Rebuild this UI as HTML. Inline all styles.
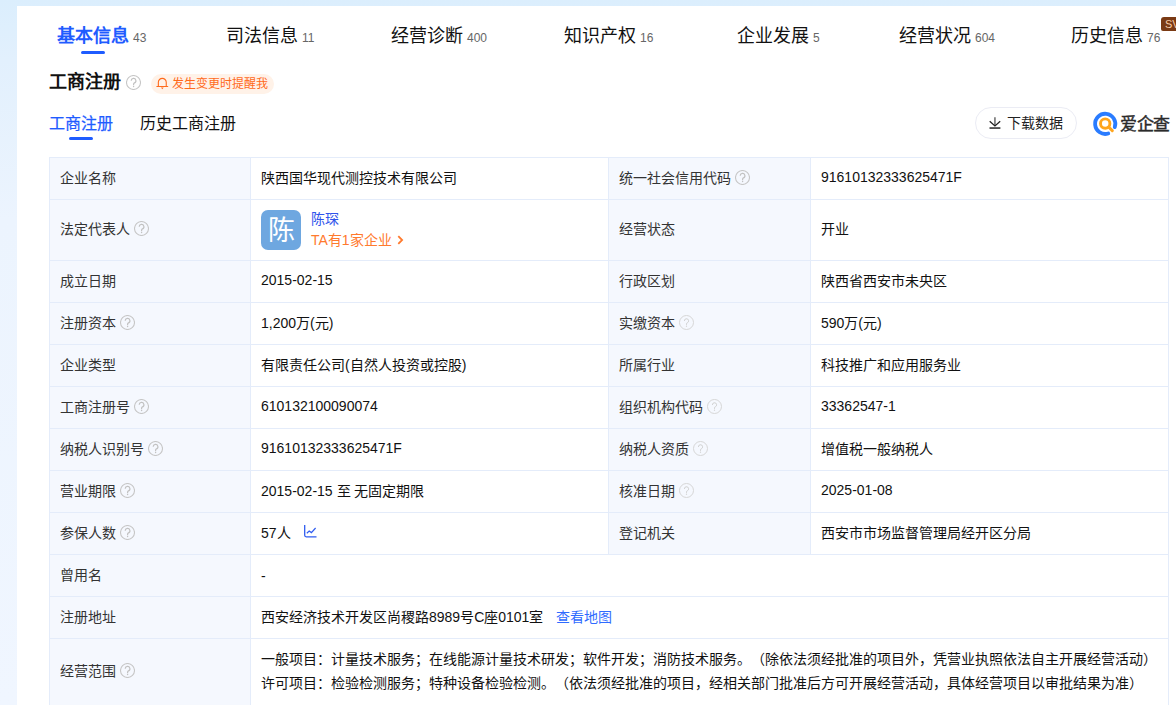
<!DOCTYPE html>
<html lang="zh-CN"><head><meta charset="utf-8">
<style>
*{box-sizing:border-box;margin:0;padding:0}
html,body{width:1176px;height:705px;overflow:hidden}
body{font-family:"Liberation Sans",sans-serif;color:#222;position:relative;
background:linear-gradient(180deg,#dbeefd 0px,#e2f0fd 60px,#ecf4fe 220px,#f0f6ff 705px)}
.card{position:absolute;left:17px;top:6px;width:1300px;height:800px;background:#fff}
.tab{position:absolute;top:24px;height:24px;line-height:24px;font-size:18px;color:#111;white-space:nowrap}
.tab .n{font-size:12px;color:#666;margin-left:4px}
.tab.on{color:#1f5cff;font-weight:bold}
.tab.on .n{font-weight:normal}
.uline{position:absolute;height:3px;border-radius:2px;background:#1f5cff}
.svip{position:absolute;left:1161px;top:17px;width:40px;height:14px;border-radius:3px 0 0 2px;background:#7a3a14;color:#f6cba9;font-size:11px;line-height:14px;padding-left:4px;font-weight:normal;white-space:nowrap}
.title{position:absolute;left:49px;top:70px;font-size:18px;font-weight:bold;color:#111;line-height:24px;white-space:nowrap}
.title .qi{position:absolute;left:77px;top:5px}
.pill{position:absolute;left:151px;top:74px;width:123px;height:20px;border-radius:10px;background:#fff2e8;color:#ff6a1b;font-size:12px;line-height:21px;white-space:nowrap;padding-left:21px}
.pill svg{position:absolute;left:5px;top:3px}
.sub{position:absolute;top:113px;font-size:16px;line-height:22px;color:#111;white-space:nowrap}
.btn{position:absolute;left:975px;top:107px;width:102px;height:32px;border:1px solid #ebecf4;border-radius:16px;font-size:14px;line-height:30px;color:#222;white-space:nowrap;padding-left:31px}
.btn svg{position:absolute;left:12px;top:8px}
.logo{position:absolute;left:1088px;top:106px}
.logotxt{position:absolute;left:1120px;top:113px;font-size:17px;line-height:24px;color:#2b2b2b;font-weight:normal;-webkit-text-stroke:0.45px #2b2b2b;white-space:nowrap;letter-spacing:-0.5px}
table{position:absolute;left:49px;top:157px;border-collapse:collapse;table-layout:fixed;width:1119px}
td{border:1px solid #e4ecfa;font-size:14px;color:#111;padding:0 0 4px 10px;height:42px;vertical-align:middle;white-space:nowrap;position:relative}
td.l{background:#f5f8fe;color:#333}
td .qi{vertical-align:-2px;margin-left:4px}
td{text-spacing-trim:space-all}
.av{position:absolute;left:10px;top:10px;width:40px;height:40px;border-radius:7px;background:#6ea7e0;color:#fff;font-size:27px;line-height:43px;text-align:center}
.nm{position:absolute;left:60px;top:9px;font-size:14px;line-height:20px;color:#2f54eb;-webkit-text-stroke:0}
.ta{position:absolute;left:60px;top:30px;font-size:14px;line-height:20px;color:#ff7a2e;-webkit-text-stroke:0}
.ta svg{vertical-align:0px;margin-left:5px}
.lnk{color:#2f6bff;margin-left:13px}
.scope{line-height:24px;padding-top:8px;vertical-align:top}
.dash{position:relative;top:2px}
</style></head><body>
<div class="card"></div>

<div class="tab on" style="left:57px">基本信息<span class="n">43</span></div>
<div class="uline" style="left:81px;top:51px;width:24px"></div>
<div class="tab" style="left:226px">司法信息<span class="n">11</span></div>
<div class="tab" style="left:391px">经营诊断<span class="n">400</span></div>
<div class="tab" style="left:564px">知识产权<span class="n">16</span></div>
<div class="tab" style="left:737px">企业发展<span class="n">5</span></div>
<div class="tab" style="left:899px">经营状况<span class="n">604</span></div>
<div class="tab" style="left:1071px">历史信息<span class="n">76</span></div>
<div class="svip">SVIP</div>

<div class="title">工商注册 <svg class="qi" width="15" height="15" viewBox="0 0 15 15"><circle cx="7.5" cy="7.5" r="7" fill="none" stroke="#c6c6c6" stroke-width="1.05"/><path d="M5.2 5.7a2.35 2.35 0 1 1 3.3 2.15c-.6.3-.9.7-.9 1.3v1" fill="none" stroke="#c2c2c2" stroke-width="1.2"/><circle cx="7.6" cy="11.5" r=".7" fill="#c2c2c2"/></svg></div>
<div class="pill"><svg width="13" height="14" viewBox="0 0 13 14"><path d="M2.35 9.5V5.3a3.95 3.95 0 0 1 7.9 0V9.5" fill="none" stroke="#ff6a1b" stroke-width="1.1"/><path d="M0.9 9.5H11.7" stroke="#ff6a1b" stroke-width="1.2" stroke-linecap="round"/><path d="M4.9 10.5h2.8l-1.4 1.7z" fill="#ff6a1b"/></svg>发生变更时提醒我</div>

<div class="sub" style="left:49px;color:#1f5cff;-webkit-text-stroke:0.25px #1f5cff">工商注册</div>
<div class="uline" style="left:69px;top:137px;width:24px"></div>
<div class="sub" style="left:140px">历史工商注册</div>

<div class="btn"><svg width="14" height="14" viewBox="0 0 14 14"><path d="M6.95 1.2V9.6" stroke="#444" stroke-width="1.2"/><path d="M1.7 5.3L6.95 9.9L12.2 5.3" fill="none" stroke="#222" stroke-width="1.3"/><path d="M1.5 12.05H12.4" stroke="#333" stroke-width="1.6"/></svg>下载数据</div>
<svg class="logo" width="31" height="34" viewBox="0 0 31 34"><path d="M26.75 21.14A10.1 10.1 0 1 0 20.24 27.48" fill="none" stroke="#2a7cff" stroke-width="3.8" stroke-linecap="round"/><circle cx="17.2" cy="17.6" r="4.7" fill="none" stroke="#ffa51d" stroke-width="2.9"/><path d="M20.6 21L24.3 24.6" stroke="#ffa51d" stroke-width="3" stroke-linecap="round"/></svg>
<div class="logotxt">爱企查</div>

<table>
<colgroup><col style="width:201px"><col style="width:358px"><col style="width:202px"><col style="width:358px"></colgroup>
<tr><td class="l">企业名称</td><td>陕西国华现代测控技术有限公司</td><td class="l">统一社会信用代码<svg class="qi" width="15" height="15" viewBox="0 0 15 15"><circle cx="7.5" cy="7.5" r="7" fill="none" stroke="#c6c6c6" stroke-width="1.05"/><path d="M5.2 5.7a2.35 2.35 0 1 1 3.3 2.15c-.6.3-.9.7-.9 1.3v1" fill="none" stroke="#c2c2c2" stroke-width="1.2"/><circle cx="7.6" cy="11.5" r=".7" fill="#c2c2c2"/></svg></td><td>91610132333625471F</td></tr>
<tr><td class="l" style="height:61px">法定代表人<svg class="qi" width="15" height="15" viewBox="0 0 15 15"><circle cx="7.5" cy="7.5" r="7" fill="none" stroke="#c6c6c6" stroke-width="1.05"/><path d="M5.2 5.7a2.35 2.35 0 1 1 3.3 2.15c-.6.3-.9.7-.9 1.3v1" fill="none" stroke="#c2c2c2" stroke-width="1.2"/><circle cx="7.6" cy="11.5" r=".7" fill="#c2c2c2"/></svg></td><td><div class="av">陈</div><div class="nm">陈琛</div><div class="ta">TA有1家企业<svg width="7" height="10" viewBox="0 0 7 10"><path d="M1.3 1.2l3.8 3.8-3.8 3.8" fill="none" stroke="#ff7a2e" stroke-width="1.8"/></svg></div></td><td class="l">经营状态</td><td>开业</td></tr>
<tr><td class="l">成立日期</td><td>2015-02-15</td><td class="l">行政区划</td><td>陕西省西安市未央区</td></tr>
<tr><td class="l">注册资本<svg class="qi" width="15" height="15" viewBox="0 0 15 15"><circle cx="7.5" cy="7.5" r="7" fill="none" stroke="#c6c6c6" stroke-width="1.05"/><path d="M5.2 5.7a2.35 2.35 0 1 1 3.3 2.15c-.6.3-.9.7-.9 1.3v1" fill="none" stroke="#c2c2c2" stroke-width="1.2"/><circle cx="7.6" cy="11.5" r=".7" fill="#c2c2c2"/></svg></td><td>1,200万(元)</td><td class="l">实缴资本<svg class="qi" width="15" height="15" viewBox="0 0 15 15"><circle cx="7.5" cy="7.5" r="7" fill="none" stroke="#d6d6d6" stroke-width="1"/><path d="M5.4 5.9a2.1 2.1 0 1 1 2.9 1.9c-.5.25-.8.6-.8 1.1v.9" fill="none" stroke="#d0d0d0" stroke-width="1"/><circle cx="7.5" cy="11.2" r=".65" fill="#d0d0d0"/></svg></td><td>590万(元)</td></tr>
<tr><td class="l">企业类型</td><td>有限责任公司(自然人投资或控股)</td><td class="l">所属行业</td><td>科技推广和应用服务业</td></tr>
<tr><td class="l">工商注册号<svg class="qi" width="15" height="15" viewBox="0 0 15 15"><circle cx="7.5" cy="7.5" r="7" fill="none" stroke="#c6c6c6" stroke-width="1.05"/><path d="M5.2 5.7a2.35 2.35 0 1 1 3.3 2.15c-.6.3-.9.7-.9 1.3v1" fill="none" stroke="#c2c2c2" stroke-width="1.2"/><circle cx="7.6" cy="11.5" r=".7" fill="#c2c2c2"/></svg></td><td>610132100090074</td><td class="l">组织机构代码<svg class="qi" width="15" height="15" viewBox="0 0 15 15"><circle cx="7.5" cy="7.5" r="7" fill="none" stroke="#d6d6d6" stroke-width="1"/><path d="M5.4 5.9a2.1 2.1 0 1 1 2.9 1.9c-.5.25-.8.6-.8 1.1v.9" fill="none" stroke="#d0d0d0" stroke-width="1"/><circle cx="7.5" cy="11.2" r=".65" fill="#d0d0d0"/></svg></td><td>33362547-1</td></tr>
<tr><td class="l">纳税人识别号<svg class="qi" width="15" height="15" viewBox="0 0 15 15"><circle cx="7.5" cy="7.5" r="7" fill="none" stroke="#c6c6c6" stroke-width="1.05"/><path d="M5.2 5.7a2.35 2.35 0 1 1 3.3 2.15c-.6.3-.9.7-.9 1.3v1" fill="none" stroke="#c2c2c2" stroke-width="1.2"/><circle cx="7.6" cy="11.5" r=".7" fill="#c2c2c2"/></svg></td><td>91610132333625471F</td><td class="l">纳税人资质<svg class="qi" width="15" height="15" viewBox="0 0 15 15"><circle cx="7.5" cy="7.5" r="7" fill="none" stroke="#d6d6d6" stroke-width="1"/><path d="M5.4 5.9a2.1 2.1 0 1 1 2.9 1.9c-.5.25-.8.6-.8 1.1v.9" fill="none" stroke="#d0d0d0" stroke-width="1"/><circle cx="7.5" cy="11.2" r=".65" fill="#d0d0d0"/></svg></td><td>增值税一般纳税人</td></tr>
<tr><td class="l">营业期限<svg class="qi" width="15" height="15" viewBox="0 0 15 15"><circle cx="7.5" cy="7.5" r="7" fill="none" stroke="#c6c6c6" stroke-width="1.05"/><path d="M5.2 5.7a2.35 2.35 0 1 1 3.3 2.15c-.6.3-.9.7-.9 1.3v1" fill="none" stroke="#c2c2c2" stroke-width="1.2"/><circle cx="7.6" cy="11.5" r=".7" fill="#c2c2c2"/></svg></td><td>2015-02-15 至 无固定期限</td><td class="l">核准日期<svg class="qi" width="15" height="15" viewBox="0 0 15 15"><circle cx="7.5" cy="7.5" r="7" fill="none" stroke="#d6d6d6" stroke-width="1"/><path d="M5.4 5.9a2.1 2.1 0 1 1 2.9 1.9c-.5.25-.8.6-.8 1.1v.9" fill="none" stroke="#d0d0d0" stroke-width="1"/><circle cx="7.5" cy="11.2" r=".65" fill="#d0d0d0"/></svg></td><td>2025-01-08</td></tr>
<tr><td class="l">参保人数<svg class="qi" width="15" height="15" viewBox="0 0 15 15"><circle cx="7.5" cy="7.5" r="7" fill="none" stroke="#c6c6c6" stroke-width="1.05"/><path d="M5.2 5.7a2.35 2.35 0 1 1 3.3 2.15c-.6.3-.9.7-.9 1.3v1" fill="none" stroke="#c2c2c2" stroke-width="1.2"/><circle cx="7.6" cy="11.5" r=".7" fill="#c2c2c2"/></svg></td><td>57人<svg style="margin-left:13px;vertical-align:0px" width="13" height="13" viewBox="0 0 13 13"><path d="M0.7 0v10.3q0 1.5 1.5 1.5H12.5" fill="none" stroke="#2f5cf0" stroke-width="1.3"/><path d="M2.8 8.2L5.2 6l2.2 1.6L11.6 3" fill="none" stroke="#2f5cf0" stroke-width="1.2"/></svg></td><td class="l">登记机关</td><td>西安市市场监督管理局经开区分局</td></tr>
<tr><td class="l">曾用名</td><td colspan="3"><span class="dash">-</span></td></tr>
<tr><td class="l">注册地址</td><td colspan="3">西安经济技术开发区尚稷路8989号C座0101室<span class="lnk">查看地图</span></td></tr>
<tr><td class="l" style="height:67px">经营范围<svg class="qi" width="15" height="15" viewBox="0 0 15 15"><circle cx="7.5" cy="7.5" r="7" fill="none" stroke="#c6c6c6" stroke-width="1.05"/><path d="M5.2 5.7a2.35 2.35 0 1 1 3.3 2.15c-.6.3-.9.7-.9 1.3v1" fill="none" stroke="#c2c2c2" stroke-width="1.2"/><circle cx="7.6" cy="11.5" r=".7" fill="#c2c2c2"/></svg></td><td colspan="3" class="scope">一般项目：计量技术服务；在线能源计量技术研发；软件开发；消防技术服务。（除依法须经批准的项目外，凭营业执照依法自主开展经营活动）<br>许可项目：检验检测服务；特种设备检验检测。（依法须经批准的项目，经相关部门批准后方可开展经营活动，具体经营项目以审批结果为准）</td></tr>
</table>
</body></html>
